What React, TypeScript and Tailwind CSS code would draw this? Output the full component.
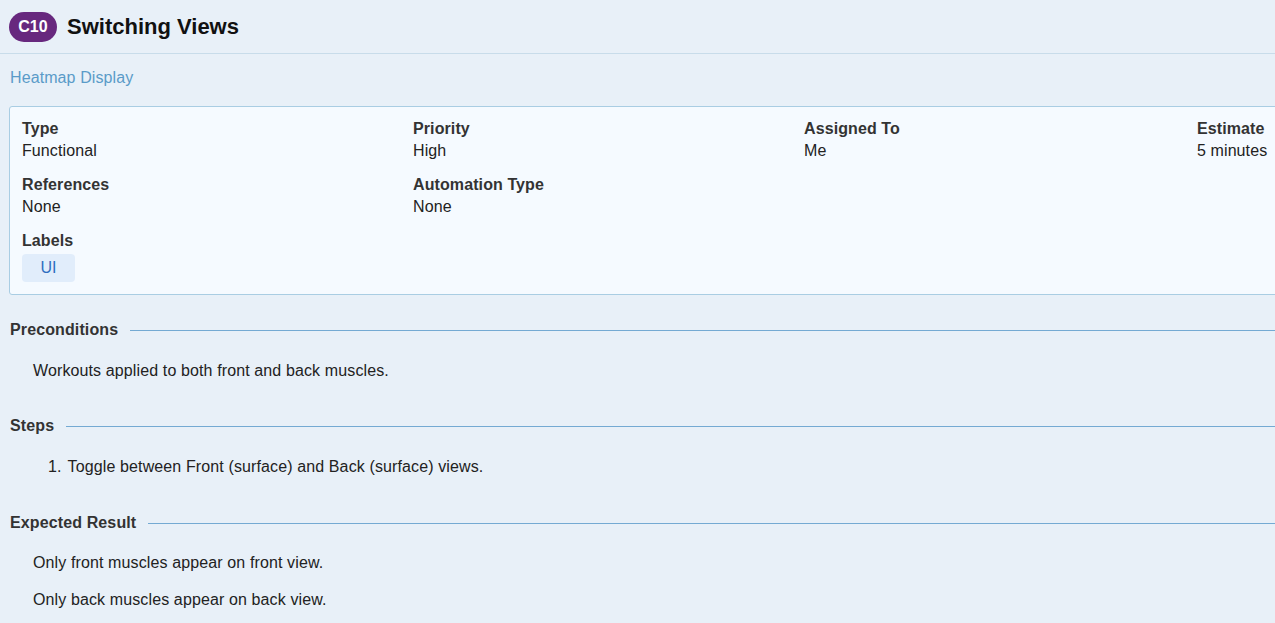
import React from 'react';

const fields = [
  { label: 'Type', value: 'Functional' },
  { label: 'Priority', value: 'High' },
  { label: 'Assigned To', value: 'Me' },
  { label: 'Estimate', value: '5 minutes' },
  { label: 'References', value: 'None' },
  { label: 'Automation Type', value: 'None' },
];

const Section: React.FC<{ title: string; bodyGap?: string; children: React.ReactNode }> = ({ title, bodyGap = 'mt-[19px]', children }) => (
  <section>
    <div className="flex items-center gap-3 pl-[10px]">
      <h2 className="text-base leading-[22px] font-bold text-[#333]">{title}</h2>
      <div className="flex-1 border-t border-[#74aad3]" />
    </div>
    <div className={bodyGap}>{children}</div>
  </section>
);

export default function App() {
  return (
    <div className="w-full min-h-[623px] overflow-hidden bg-[#e8f0f8] font-['Liberation_Sans',Arial,sans-serif] text-[#222]">
      <div className="w-[1600px]">
        <header className="flex items-center gap-[10px] pl-[9px] pt-[12px] pb-[11px] border-b border-[#c8dcea]">
          <span className="h-[30px] w-[48px] flex items-center justify-center rounded-full bg-[#67287e] text-white font-bold text-base">
            C10
          </span>
          <h1 className="text-[22px] leading-[30px] font-bold text-[#111]">Switching Views</h1>
        </header>

        <div className="pl-[10px] mt-[13px] text-base leading-[22px] tracking-[0.1px] text-[#5a9bc8]">Heatmap Display</div>

        <div className="ml-[9px] mt-[17px] border border-[#a9cde3] rounded-[3px] bg-[#f5faff] pl-3 pt-[11px] pb-3">
          <div className="grid grid-cols-[391px_391px_393px_391px] gap-y-3 tracking-[0.1px]">
            {fields.map(f => (
              <div key={f.label} className="text-base leading-[22px]">
                <div className="font-bold text-[#333]">{f.label}</div>
                <div className="text-[#222]">{f.value}</div>
              </div>
            ))}
            <div className="col-span-2 row-start-3 text-base leading-[22px]">
              <div className="font-bold text-[#333]">Labels</div>
              <span className="mt-[2px] inline-flex h-[28px] w-[53px] items-center justify-center rounded-[4px] bg-[#e1edfb] text-[#2f6fc0]">
                UI
              </span>
            </div>
          </div>
        </div>

        <div className="mt-6 tracking-[0.12px]">
          <Section title="Preconditions">
            <p className="pl-[33px] text-base leading-[22px]">Workouts applied to both front and back muscles.</p>
          </Section>

          <div className="mt-[33px]">
            <Section title="Steps">
              <ol className="pl-[48px] text-base leading-[22px]">
                <li className="flex gap-[6px]">
                  <span>1.</span>
                  <span>Toggle between Front (surface) and Back (surface) views.</span>
                </li>
              </ol>
            </Section>
          </div>

          <div className="mt-[34px]">
            <Section title="Expected Result" bodyGap="mt-[18px]">
              <div className="pl-[33px] text-base leading-[22px] flex flex-col gap-[15px]">
                <p>Only front muscles appear on front view.</p>
                <p>Only back muscles appear on back view.</p>
              </div>
            </Section>
          </div>
        </div>
      </div>
    </div>
  );
}
